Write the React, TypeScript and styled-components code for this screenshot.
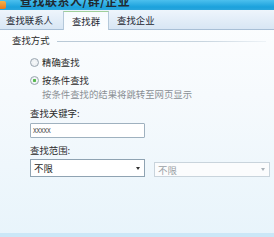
import React from "react";
import styled, { createGlobalStyle } from "styled-components";

const Global = createGlobalStyle`
  html, body { margin: 0; padding: 0; }
  body {
    width: 274px; height: 237px; overflow: hidden;
    font-family: "Noto Sans CJK SC", "Noto Sans", sans-serif;
    color: #2b2b2b;
  }
`;

const Window = styled.div`
  width: 274px; height: 237px;
  display: flex; flex-direction: column;
  background: linear-gradient(#fdfeff 0%, #f6fafd 40%, #e8f4fb 100%);
`;

const TitleBar = styled.div`
  height: 10px; flex: none;
  background: linear-gradient(#4cc0ee, #1ba1dc 70%, #2aa6dc);
  display: flex; align-items: flex-end; overflow: hidden;
`;

const TitleIcon = styled.div`
  width: 6px; height: 8px; margin-bottom: 1px;
  background: linear-gradient(#f7b34a, #e7781d);
  border-radius: 0 2px 2px 0;
  flex: none;
`;

const TitleText = styled.div`
  margin-left: 14px; margin-bottom: 3px;
  font-size: 12px; font-weight: bold; line-height: 12px;
  color: #1f2a33;
  letter-spacing: 0.5px;
  white-space: nowrap;
`;

const TabBar = styled.div`
  height: 19px; flex: none;
  display: flex; align-items: flex-end;
  background: linear-gradient(#eef5fc, #d8e6f4);
  border-bottom: 1px solid #a8bfd6;
`;

const Tab = styled.div<{ $active?: boolean }>`
  height: ${(p) => (p.$active ? "19px" : "18px")};
  box-sizing: border-box;
  padding: 0 ${(p) => (p.$active ? "8px" : "6px")};
  margin-bottom: ${(p) => (p.$active ? "-1px" : "0")};
  font-size: 9.4px; line-height: 17px;
  color: #1c2630;
  display: flex; align-items: center;
  ${(p) =>
    p.$active
      ? `background: linear-gradient(#f7fbfe, #fbfdff);
         border: 1px solid #b4c8da; border-bottom: none;
         border-top-color: #9fcf9a;
         margin-left: 4px; margin-right: 2px;`
      : ``}
`;

const Content = styled.div`
  flex: 1;
  display: flex; flex-direction: column;
  padding-top: 4px;
`;

const Legend = styled.div`
  display: flex; align-items: center;
  height: 12px; padding-left: 12px; padding-right: 8px;
  font-size: 9.4px; line-height: 12px;
`;

const LegendLine = styled.div`
  flex: 1; height: 1px; margin-left: 7px; margin-top: 3px;
  background: linear-gradient(90deg, #b9c9d6, #c8d5df 70%, rgba(210,222,232,0.3));
`;

const RadioRow = styled.label<{ $mt: number }>`
  display: flex; align-items: center;
  height: 12px; margin-top: ${(p) => p.$mt}px;
  padding-left: 30px;
  font-size: 9.4px; line-height: 12px;
`;

const RadioDot = styled.span<{ $checked?: boolean }>`
  width: 9px; height: 9px; box-sizing: border-box;
  border-radius: 50%;
  border: 1px solid #9aa6b0;
  background: radial-gradient(circle, ${(p) => (p.$checked ? "#4fb34a 0, #5cbc52 28%, #f4f7f9 34%" : "#f7f9fa 0")}, #e4e9ed 100%);
  margin-right: 3px; flex: none;
`;

const Hint = styled.div`
  margin-top: 2px; height: 12px; padding-left: 42px;
  font-size: 9.4px; line-height: 12px; color: #8a8f94;
`;

const FieldLabel = styled.div<{ $mt: number }>`
  margin-top: ${(p) => p.$mt}px; height: 12px; padding-left: 30px;
  font-size: 9.4px; line-height: 12px;
`;

const InputBox = styled.div`
  margin: 4px 0 0 30px; width: 115px; height: 15px; box-sizing: border-box;
  border: 1px solid #9fb1bf; border-radius: 1px; background: #fff;
  font-size: 6.5px; line-height: 13px; padding-left: 2px; color: #444;
  letter-spacing: -0.2px;
`;

const SelectRow = styled.div`
  display: flex; align-items: flex-end; gap: 9px;
  margin: 3px 0 0 30px;
`;

const Select = styled.div<{ $disabled?: boolean; $w: number; $h: number }>`
  width: ${(p) => p.$w}px; height: ${(p) => p.$h}px; box-sizing: border-box;
  border: 1px solid ${(p) => (p.$disabled ? "#c9d4dc" : "#8fa3b2")};
  background: ${(p) => (p.$disabled ? "#fbfcfd" : "#fff")};
  display: flex; align-items: center; justify-content: space-between;
  padding: 0 3px 0 3px;
  font-size: 9.4px; color: ${(p) => (p.$disabled ? "#9aa0a5" : "#1e1e1e")};
`;

const Arrow = styled.span<{ $disabled?: boolean }>`
  width: 0; height: 0;
  border-left: 2.5px solid transparent; border-right: 2.5px solid transparent;
  border-top: 3px solid ${(p) => (p.$disabled ? "#a9b2b9" : "#333")};
  margin-right: 1px;
`;

const BottomBar = styled.div`
  height: 4px; flex: none; background: #cbe7f7;
`;

export default function App() {
  return (
    <>
      <Global />
      <Window>
        <TitleBar>
          <TitleIcon />
          <TitleText>查找联系人/群/企业</TitleText>
        </TitleBar>
        <TabBar>
          <Tab>查找联系人</Tab>
          <Tab $active>查找群</Tab>
          <Tab>查找企业</Tab>
        </TabBar>
        <Content>
          <Legend>
            查找方式
            <LegendLine />
          </Legend>
          <RadioRow $mt={10}>
            <RadioDot />
            精确查找
          </RadioRow>
          <RadioRow $mt={6}>
            <RadioDot $checked />
            按条件查找
          </RadioRow>
          <Hint>按条件查找的结果将跳转至网页显示</Hint>
          <FieldLabel $mt={7}>查找关键字:</FieldLabel>
          <InputBox>XXXXX</InputBox>
          <FieldLabel $mt={6}>查找范围:</FieldLabel>
          <SelectRow>
            <Select $w={115} $h={18}>
              不限
              <Arrow />
            </Select>
            <Select $disabled $w={116} $h={15}>
              不限
              <Arrow $disabled />
            </Select>
          </SelectRow>
        </Content>
        <BottomBar />
      </Window>
    </>
  );
}
